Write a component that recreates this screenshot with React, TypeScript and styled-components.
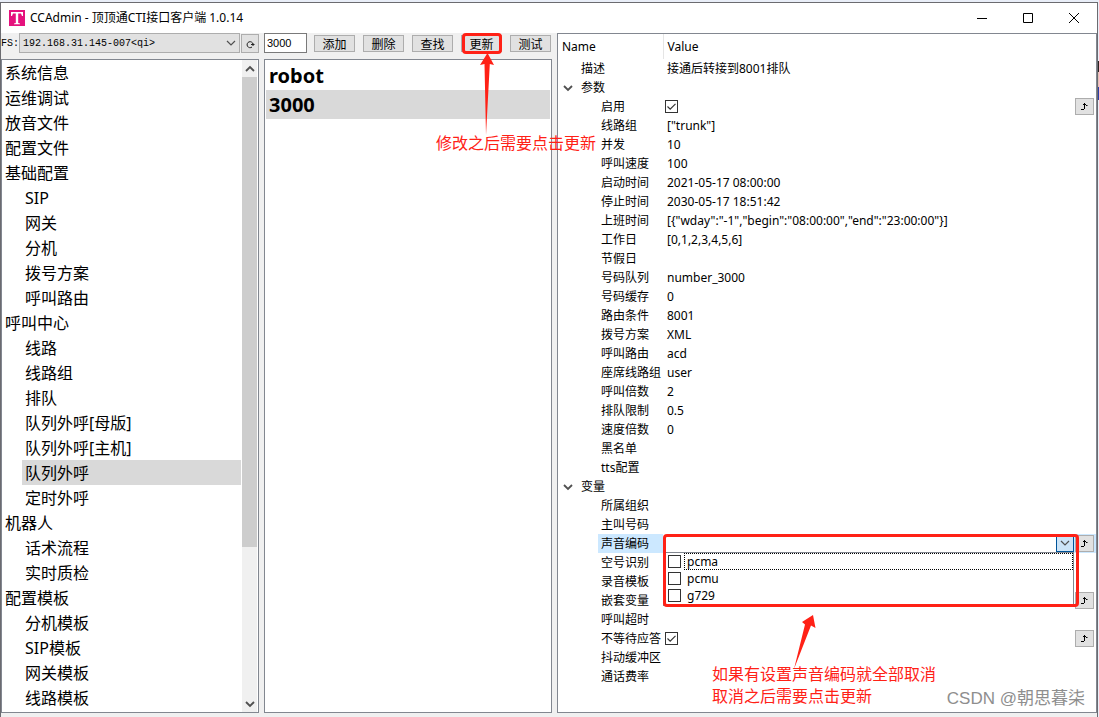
import React from 'react';
import styled, { createGlobalStyle } from 'styled-components';

const cjk = '"Noto Sans CJK SC", sans-serif';
const ui = `"Noto Sans", ${cjk}`;
const mono = `"Liberation Mono", "Noto Sans CJK SC", monospace`;
const red = '#ff2116';
const frame = '#828790';

const Global = createGlobalStyle`
  * { box-sizing: border-box; }
  html, body, #root { height: 100%; }
  body { margin: 0; overflow: hidden; background: #e9eef8; color: #000; font: 12px/19px ${ui}; }
  button, input { font: inherit; color: inherit; }
  ul { list-style: none; margin: 0; padding: 0; }
`;

const Desktop = styled.div`
  height: 100%;
  padding: 2px 1px 0 0;
  background: linear-gradient(#e9eef8 61px, #2a2220 61px 72px, #e3c3b8 72px 87px, #2b3fa8 87px 100px, #e9eef8 100px);
`;

const AppWindow = styled.main`
  position: relative;
  height: 100%;
  display: flex;
  flex-direction: column;
  background: #f0f0f0;
  border: 1px solid #6b6b70;
  border-bottom: 0;
`;

const TitleBar = styled.header`
  flex: none;
  height: 30px;
  display: flex;
  align-items: center;
  padding-left: 8px;
  background: #fff;
`;

const Title = styled.h1`
  flex: 1;
  margin: 0 0 0 5px;
  font-size: 12px;
  font-weight: 400;
  line-height: 30px;
`;

const CaptionButton = styled.button`
  width: 46px;
  height: 30px;
  padding: 0;
  border: 0;
  background: transparent;
  display: grid;
  place-items: center;
`;

const Body = styled.div`
  flex: 1;
  min-height: 0;
  display: flex;
  padding-bottom: 4px;
`;

const LeftColumn = styled.section`
  flex: none;
  width: 258px;
  display: flex;
  flex-direction: column;
`;

const MiddleColumn = styled.section`
  flex: none;
  width: 288px;
  margin: 0 5px;
  display: flex;
  flex-direction: column;
`;

const Toolbar = styled.div`
  flex: none;
  height: 26px;
  display: flex;
  align-items: flex-start;
`;

const ServerLabel = styled.label`
  flex: none;
  width: 18px;
  overflow: hidden;
  display: flex;
  justify-content: flex-end;
  font: 10px/22px ${mono};
`;

const SelectWrap = styled.div`
  flex: 1;
  display: grid;
  align-items: center;
  & > * { grid-area: 1 / 1; }
  & > svg { justify-self: end; margin-right: 4px; pointer-events: none; }
`;

const ServerSelect = styled.select`
  appearance: none;
  width: 100%;
  height: 20px;
  padding: 1px 3px 0;
  border: 1px solid #adadad;
  border-radius: 0;
  background: #e1e1e1;
  color: #000;
  font: 10px/17px ${mono};
`;

const PushButton = styled.button<{ $icon?: boolean }>`
  flex: none;
  width: ${p => (p.$icon ? 18 : 41)}px;
  height: ${p => (p.$icon ? 19 : 17)}px;
  padding: 0;
  border: 1px solid #adadad;
  background: #e1e1e1;
  font: 12px/15px ${cjk};
  display: grid;
  place-items: center;
`;

const RefreshSlot = styled.div`
  padding: 1px 0 0 1px;
`;

const ButtonRow = styled.div`
  display: flex;
  gap: 8px;
  padding: 2px 0 0 7px;
`;

const KeyInput = styled.input`
  width: 43px;
  height: 20px;
  padding: 0 2px;
  border: 1px solid #7a7a7a;
  background: #fff;
  font: 11px/18px "Liberation Sans", sans-serif;
`;

const Panel = styled.div`
  flex: 1;
  min-height: 0;
  display: flex;
  border: 1px solid ${frame};
  background: #fff;
  overflow: hidden;
`;

const Tree = styled.ul`
  flex: 1;
  overflow: hidden;
`;

const TreeItem = styled.li<{ $child?: boolean; $selected?: boolean }>`
  height: 25px;
  margin-left: ${p => (p.$child ? 20 : 0)}px;
  margin-right: 1px;
  padding-left: 3px;
  background: ${p => (p.$selected ? '#d9d9d9' : 'transparent')};
  font-size: 16px;
  line-height: 27px;
  white-space: nowrap;
`;

const ScrollBar = styled.div`
  flex: none;
  width: 16px;
  display: flex;
  flex-direction: column;
  justify-content: space-between;
  background: #f0f0f0;
  border-right: 1px solid #fff;
`;

const ScrollArrow = styled.button`
  flex: none;
  height: 17px;
  padding: 0;
  border: 0;
  background: transparent;
  display: grid;
  place-items: center;
`;

const ScrollTrack = styled.div`
  flex: 1;
`;

const ScrollThumb = styled.div`
  height: 76%;
  background: #cdcdcd;
`;

const QueueList = styled.ul`
  flex: 1;
  padding: 1px;
`;

const QueueItem = styled.li<{ $selected?: boolean }>`
  height: 29px;
  padding-left: 3px;
  background: ${p => (p.$selected ? '#d9d9d9' : 'transparent')};
  font-size: 20px;
  font-weight: 700;
  line-height: 29px;
`;

const PropertyPanel = styled(Panel)`
  flex-direction: column;
`;

const PropertyTable = styled.table`
  width: 100%;
  table-layout: fixed;
  border-collapse: collapse;
  th, td { padding: 0; font-weight: 400; text-align: left; white-space: nowrap; }
`;

const HeadCell = styled.th<{ $name?: boolean }>`
  width: ${p => (p.$name ? '105px' : 'auto')};
  height: 25px;
  border-right: ${p => (p.$name ? '1px solid #e5e5e5' : '0')};
  span { padding-left: 4px; }
`;

const NameCell = styled.th<{ $level: number; $selected?: boolean }>`
  height: 19px;
  line-height: 19px;
  & > div {
    display: flex;
    align-items: center;
    height: 19px;
    margin-left: ${p => (p.$level === 2 ? 40 : 0)}px;
    padding-left: 3px;
    background: ${p => (p.$selected ? '#cce8ff' : 'transparent')};
  }
`;

const Expander = styled.span`
  width: 20px;
  height: 19px;
  display: flex;
  align-items: center;
  padding-left: 2px;
`;

const ValueCell = styled.td<{ $selected?: boolean }>`
  background: ${p => (p.$selected ? '#cce8ff' : 'transparent')};
  & > div {
    position: relative;
    display: flex;
    align-items: center;
    height: 19px;
    padding: 0 2px 0 4px;
  }
`;

const ValueText = styled.span`
  flex: 1;
`;

const CheckSlot = styled.span`
  flex: 1;
  display: flex;
  margin-left: -2px;
`;

const CheckBox = styled.input`
  appearance: none;
  flex: none;
  width: 13px;
  height: 13px;
  margin: 0;
  border: 1px solid #333;
  background: #fff;
  &:checked {
    background: #fff url("data:image/svg+xml,%3Csvg xmlns='http://www.w3.org/2000/svg' viewBox='0 0 11 11'%3E%3Cpath d='M1.5 5.5l2.7 2.7L9.5 2.8' fill='none' stroke='%23333' stroke-width='1.2'/%3E%3C/svg%3E");
  }
`;

const JumpButton = styled.button`
  flex: none;
  width: 19px;
  height: 17px;
  padding: 0;
  border: 1px solid #adadad;
  background: #e1e1e1;
  display: grid;
  place-items: center;
`;

const Combo = styled.div`
  position: absolute;
  z-index: 2;
  top: 0;
  left: 0;
  right: 22px;
`;

const ComboField = styled.div`
  display: flex;
  height: 18px;
  background: #fff;
`;

const ComboInput = styled.input`
  flex: 1;
  min-width: 0;
  border: 0;
  padding: 0 4px;
  outline: 0;
`;

const ComboButton = styled.button`
  width: 18px;
  padding: 0;
  border: 1px solid #005499;
  background: #cce4f7;
  display: grid;
  place-items: center;
`;

const Options = styled.ul`
  height: 54px;
  border: 1px solid ${frame};
  background: #fff;
`;

const Option = styled.li<{ $focused?: boolean }>`
  label {
    display: flex;
    align-items: center;
    gap: 3px;
    height: 17px;
    padding-left: 4px;
  }
  span {
    flex: 1;
    height: 17px;
    padding-left: 2px;
    line-height: 15px;
    border: 1px ${p => (p.$focused ? 'dotted #000' : 'solid transparent')};
  }
`;

const Highlight = styled.div<{ $button?: boolean }>`
  position: absolute;
  z-index: 3;
  inset: ${p => (p.$button ? '-2px 0 -2px 1px' : '0 -5px -1px 0')};
  border: 3px solid ${red};
  border-radius: 4px;
  pointer-events: none;
`;

const HighlightAnchor = styled.div`
  position: relative;
`;

const Note = styled.p<{ $x: number; $y: number }>`
  position: absolute;
  z-index: 4;
  left: ${p => p.$x}px;
  top: ${p => p.$y}px;
  margin: 0;
  color: ${red};
  font: 16px/22px ${cjk};
  white-space: nowrap;
`;

const Arrow = styled.svg<{ $x: number; $y: number }>`
  position: absolute;
  z-index: 4;
  left: ${p => p.$x}px;
  top: ${p => p.$y}px;
  fill: ${red};
`;

const Watermark = styled.div`
  position: absolute;
  z-index: 4;
  right: 12px;
  bottom: 6px;
  color: #8e8e8e;
  font: 17px/24px "Liberation Sans", ${cjk};
  white-space: nowrap;
`;

const Chevron = ({ up = false, bold = false }: { up?: boolean; bold?: boolean }) => (
  <svg width="10" height="10" viewBox="0 0 10 10" fill="none" stroke="#505050" strokeWidth={bold ? 1.8 : 1.2} aria-hidden="true">
    <path d={up ? 'M1 7l4-4 4 4' : 'M1 3l4 4 4-4'} />
  </svg>
);

const Jump = () => (
  <JumpButton aria-label="编辑">
    <svg width="9" height="9" viewBox="0 0 9 9" fill="none" stroke="#000" aria-hidden="true">
      <path d="M1 7.5h3M4.5 7V1M3 2.5h3M6 3.5h1.500" />
    </svg>
  </JumpButton>
);

const tree: [string, boolean][] = [
  ['系统信息', false], ['运维调试', false], ['放音文件', false], ['配置文件', false], ['基础配置', false],
  ['SIP', true], ['网关', true], ['分机', true], ['拨号方案', true], ['呼叫路由', true],
  ['呼叫中心', false], ['线路', true], ['线路组', true], ['排队', true], ['队列外呼[母版]', true],
  ['队列外呼[主机]', true], ['队列外呼', true], ['定时外呼', true], ['机器人', false], ['话术流程', true],
  ['实时质检', true], ['配置模板', false], ['分机模板', true], ['SIP模板', true], ['网关模板', true], ['线路模板', true],
];

type Row = { name: string; value?: string; level?: number; open?: boolean; check?: boolean; jump?: boolean; combo?: boolean };

const rows: Row[] = [
  { name: '描述', value: '接通后转接到8001排队', level: 1 },
  { name: '参数', level: 1, open: true },
  { name: '启用', check: true, jump: true },
  { name: '线路组', value: '["trunk"]' },
  { name: '并发', value: '10' },
  { name: '呼叫速度', value: '100' },
  { name: '启动时间', value: '2021-05-17 08:00:00' },
  { name: '停止时间', value: '2030-05-17 18:51:42' },
  { name: '上班时间', value: '[{"wday":"-1","begin":"08:00:00","end":"23:00:00"}]' },
  { name: '工作日', value: '[0,1,2,3,4,5,6]' },
  { name: '节假日' },
  { name: '号码队列', value: 'number_3000' },
  { name: '号码缓存', value: '0' },
  { name: '路由条件', value: '8001' },
  { name: '拨号方案', value: 'XML' },
  { name: '呼叫路由', value: 'acd' },
  { name: '座席线路组', value: 'user' },
  { name: '呼叫倍数', value: '2' },
  { name: '排队限制', value: '0.5' },
  { name: '速度倍数', value: '0' },
  { name: '黑名单' },
  { name: 'tts配置' },
  { name: '变量', level: 1, open: true },
  { name: '所属组织' },
  { name: '主叫号码' },
  { name: '声音编码', jump: true, combo: true },
  { name: '空号识别' },
  { name: '录音模板' },
  { name: '嵌套变量', jump: true },
  { name: '呼叫超时' },
  { name: '不等待应答', check: true, jump: true },
  { name: '抖动缓冲区' },
  { name: '通话费率' },
];

const CodecCombo = () => (
  <Combo>
    <ComboField>
      <ComboInput aria-label="声音编码" />
      <ComboButton aria-label="展开"><Chevron /></ComboButton>
    </ComboField>
    <Options>
      {['pcma', 'pcmu', 'g729'].map((codec, i) => (
        <Option key={codec} $focused={i === 0}>
          <label><CheckBox type="checkbox" /><span>{codec}</span></label>
        </Option>
      ))}
    </Options>
    <Highlight />
  </Combo>
);

const PropertyRow = ({ name, value, level = 2, open, check, jump, combo }: Row) => (
  <tr>
    <NameCell scope="row" $level={level} $selected={combo}>
      <div>{level === 1 && <Expander>{open && <Chevron bold />}</Expander>}{name}</div>
    </NameCell>
    <ValueCell $selected={combo}>
      <div>
        {check ? <CheckSlot><CheckBox type="checkbox" defaultChecked aria-label={name} /></CheckSlot> : <ValueText>{value}</ValueText>}
        {combo && <CodecCombo />}
        {jump && <Jump />}
      </div>
    </ValueCell>
  </tr>
);

export default function App() {
  return (
    <Desktop>
      <Global />
      <AppWindow>
        <TitleBar>
          <svg width="16" height="16" viewBox="0 0 16 16" aria-hidden="true">
            <path fill="#e5127d" d="M0 0h16v16H0z" />
            <path fill="#fff" d="M2 2h12v4h-1l-1-2.500H9.200V13l1.800.5v.7H5v-.7l1.800-.5V3.500H4L3 6H2z" />
          </svg>
          <Title>CCAdmin - 顶顶通CTI接口客户端 1.0.14</Title>
          <CaptionButton aria-label="最小化"><svg width="10" height="10" stroke="#000"><path d="M0 5.500h10" /></svg></CaptionButton>
          <CaptionButton aria-label="最大化"><svg width="10" height="10" fill="none" stroke="#000"><path d="M.5.500h9v9h-9z" /></svg></CaptionButton>
          <CaptionButton aria-label="关闭"><svg width="10" height="10" stroke="#000"><path d="M0 0l10 10M10 0L0 10" /></svg></CaptionButton>
        </TitleBar>
        <Body>
          <LeftColumn>
            <Toolbar>
              <ServerLabel htmlFor="server">FS:</ServerLabel>
              <SelectWrap>
                <ServerSelect id="server"><option>192.168.31.145-007&lt;qi&gt;</option></ServerSelect>
                <Chevron />
              </SelectWrap>
              <RefreshSlot>
                <PushButton $icon aria-label="刷新">
                  <svg width="10" height="10" viewBox="0 0 10 10" fill="none" stroke="#222" aria-hidden="true">
                    <path d="M7 8A3 3 0 1 1 8 5M6 5.500h3.500M8 7V4.500" />
                  </svg>
                </PushButton>
              </RefreshSlot>
            </Toolbar>
            <Panel>
              <Tree>
                {tree.map(([name, child]) => (
                  <TreeItem key={name} $child={child} $selected={name === '队列外呼'}>{name}</TreeItem>
                ))}
              </Tree>
              <ScrollBar>
                <ScrollArrow aria-label="向上"><Chevron up bold /></ScrollArrow>
                <ScrollTrack><ScrollThumb /></ScrollTrack>
                <ScrollArrow aria-label="向下"><Chevron bold /></ScrollArrow>
              </ScrollBar>
            </Panel>
          </LeftColumn>
          <MiddleColumn>
            <Toolbar>
              <KeyInput aria-label="队列" defaultValue="3000" />
              <ButtonRow>
                <PushButton>添加</PushButton>
                <PushButton>删除</PushButton>
                <PushButton>查找</PushButton>
                <HighlightAnchor><PushButton>更新</PushButton><Highlight $button /></HighlightAnchor>
                <PushButton>测试</PushButton>
              </ButtonRow>
            </Toolbar>
            <Panel>
              <QueueList>
                <QueueItem>robot</QueueItem>
                <QueueItem $selected>3000</QueueItem>
              </QueueList>
            </Panel>
          </MiddleColumn>
          <PropertyPanel>
            <PropertyTable>
              <thead>
                <tr><HeadCell $name><span>Name</span></HeadCell><HeadCell><span>Value</span></HeadCell></tr>
              </thead>
              <tbody>{rows.map(row => <PropertyRow key={row.name} {...row} />)}</tbody>
            </PropertyTable>
          </PropertyPanel>
        </Body>
        <Arrow $x={478} $y={50} width="18" height="82"><path d="M8.500 0L15 12 10.800 11 7 82 5.500 11 1 12z" /></Arrow>
        <Note $x={435} $y={128}>修改之后需要点击更新</Note>
        <Arrow $x={790} $y={611} width="28" height="56"><path d="M22 1L24.500 14 20 11.500 3 55 14 10.500 11 8z" /></Arrow>
        <Note $x={711} $y={659}>如果有设置声音编码就全部取消<br />取消之后需要点击更新</Note>
        <Watermark>CSDN @朝思暮柒</Watermark>
      </AppWindow>
    </Desktop>
  );
}
